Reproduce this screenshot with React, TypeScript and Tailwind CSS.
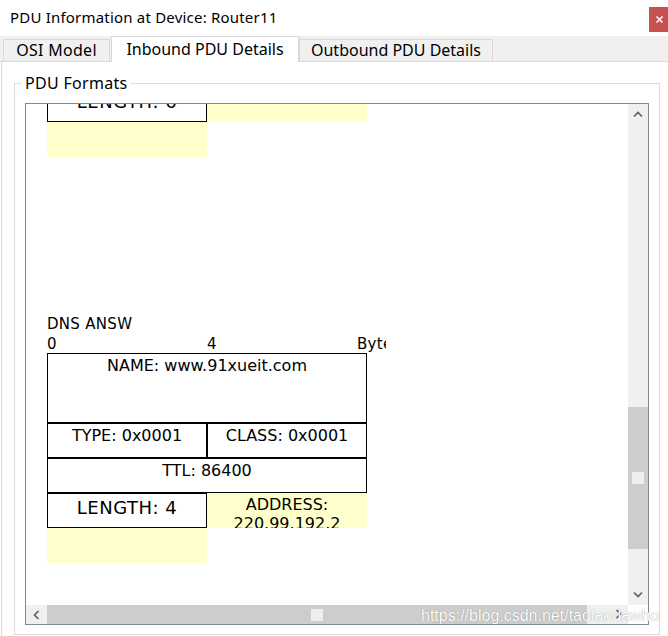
import type { ReactNode } from "react";

const YELLOW = "bg-[#ffffcc]";

function Chevron({ dir }: { dir: "up" | "down" | "left" | "right" }) {
  const paths = {
    up: "M1 5.5 L5 1.5 L9 5.5",
    down: "M1 1.5 L5 5.5 L9 1.5",
    left: "M5.5 1 L1.5 5 L5.5 9",
    right: "M1.5 1 L5.5 5 L1.5 9",
  };
  const vertical = dir === "up" || dir === "down";
  return (
    <svg
      width={vertical ? 10 : 7}
      height={vertical ? 7 : 10}
      viewBox={vertical ? "0 0 10 7" : "0 0 7 10"}
    >
      <path d={paths[dir]} fill="none" stroke="#606060" strokeWidth="1.7" />
    </svg>
  );
}

function Cell({
  w,
  big,
  tall,
  children,
}: {
  w: number;
  big?: boolean;
  tall?: boolean;
  children?: ReactNode;
}) {
  return (
    <div
      className={`${w === 320 ? "w-[320px]" : "w-[160px]"} ${
        tall ? "h-[70px]" : "h-[35px]"
      } shrink-0 overflow-hidden border border-black text-center whitespace-nowrap ${
        big
          ? "pt-[3px] text-[18px] leading-[21px] tracking-[0.5px]"
          : "pt-[2px] text-[16px] leading-[19px]"
      }`}
    >
      {children}
    </div>
  );
}

function Tab({ label, active }: { label: string; active?: boolean }) {
  return active ? (
    <div className="flex h-[26px] w-[188px] shrink-0 justify-center border-x border-t border-[#d9d9d9] bg-white pt-[2px] text-[16px] leading-[20px]">
      {label}
    </div>
  ) : (
    <div
      className={`flex h-[23px] shrink-0 justify-center border border-[#d9d9d9] bg-[#f0f0f0] text-[16px] leading-[20px] ${
        label === "OSI Model" ? "w-[107px] tracking-[0.3px]" : "w-[194px]"
      }`}
    >
      {label}
    </div>
  );
}

export default function App() {
  return (
    <div className="relative h-[636px] w-[668px] overflow-hidden bg-white font-['Noto_Sans',sans-serif] text-black">
      {/* title bar */}
      <div className="flex h-[36px] items-start justify-between">
        <span className="ml-[10px] mt-[8px] text-[15px] leading-[19px] tracking-[0.2px]">
          PDU Information at Device: Router11
        </span>
        <div className="mt-[7px] flex h-[25px] w-[19px] items-center bg-[#c75050] pl-[7px]">
          <svg width="7" height="7" viewBox="0 0 7 7">
            <path d="M0.5 0.5 L6.5 6.5 M6.5 0.5 L0.5 6.5" stroke="white" strokeWidth="1.5" />
          </svg>
        </div>
      </div>

      {/* tabs */}
      <div className="flex h-[26px] items-end bg-[#f0f0f0]">
        <div className="h-[1px] w-[3px] bg-[#d9d9d9]" />
        <Tab label="OSI Model" />
        <div className="h-[1px] w-[1px] bg-[#d9d9d9]" />
        <Tab label="Inbound PDU Details" active />
        <Tab label="Outbound PDU Details" />
        <div className="h-[1px] flex-1 bg-[#d9d9d9]" />
      </div>

      {/* tab panel */}
      <div className="ml-[1px] h-[574px] border-l border-[#d9d9d9] pt-[11px]">
        <fieldset className="ml-[12px] h-[562px] w-[646px] border border-[#dcdcdc]">
          <legend className="ml-[7px] px-[3px] text-[16px] leading-[20px] tracking-[0.3px]">
            PDU Formats
          </legend>

          <div className="ml-[10px] mt-[10px] flex h-[522px] w-[624px] flex-col border border-[#828790]">
            <div className="flex h-[501px]">
              {/* viewport */}
              <div className="h-[501px] w-[602px] overflow-hidden pl-[21px] font-['DejaVu_Sans',sans-serif]">
                <div className="-mt-[17px]">
                  <div className="flex">
                    <Cell w={160} big>
                      LENGTH: 6
                    </Cell>
                    <div className={`h-[35px] w-[160px] ${YELLOW}`} />
                  </div>
                  <div className={`h-[35px] w-[160px] ${YELLOW}`} />
                </div>

                <div className="mt-[158px]">
                  <div className="h-[20px] w-[86px] overflow-hidden whitespace-nowrap text-[15px] leading-[18px] tracking-[0.3px]">
                    DNS ANSWER
                  </div>
                  <div className="flex h-[18px] text-[15px] leading-[18px] tracking-[0.3px]">
                    <span className="w-[160px]">0</span>
                    <span className="w-[150px]">4</span>
                    <span className="w-[29px] overflow-hidden whitespace-nowrap">Bytes</span>
                  </div>
                  <Cell w={320} tall>
                    NAME: www.91xueit.com
                  </Cell>
                  <div className="flex">
                    <Cell w={160}>TYPE: 0x0001</Cell>
                    <Cell w={160}>CLASS: 0x0001</Cell>
                  </div>
                  <Cell w={320}>TTL: 86400</Cell>
                  <div className="flex">
                    <Cell w={160} big>
                      LENGTH: 4
                    </Cell>
                    <div
                      className={`h-[35px] w-[160px] overflow-hidden pt-[2px] text-center text-[16px] leading-[19px] ${YELLOW}`}
                    >
                      ADDRESS:
                      <br />
                      220.99.192.2
                    </div>
                  </div>
                  <div className={`h-[35px] w-[160px] ${YELLOW}`} />
                </div>
              </div>

              {/* vertical scrollbar */}
              <div className="flex w-[20px] flex-col bg-[#f0f0f0]">
                <div className="flex h-[20px] items-center justify-center">
                  <Chevron dir="up" />
                </div>
                <div className="flex-1">
                  <div className="mt-[283px] flex h-[142px] items-center justify-center bg-[#cdcdcd]">
                    <div className="h-[12px] w-[12px] bg-[#eeeeee]" />
                  </div>
                </div>
                <div className="flex h-[20px] items-center justify-center pb-[2px]">
                  <Chevron dir="down" />
                </div>
              </div>
            </div>

            {/* horizontal scrollbar */}
            <div className="flex h-[19px]">
              <div className="flex w-[602px] bg-[#f0f0f0]">
                <div className="flex w-[21px] items-center justify-center">
                  <Chevron dir="left" />
                </div>
                <div className="flex w-[540px] items-center justify-center bg-[#cdcdcd]">
                  <div className="h-[12px] w-[12px] bg-[#eeeeee]" />
                </div>
                <div className="w-[21px]" />
                <div className="flex w-[20px] items-center justify-center pb-[1px]">
                  <Chevron dir="right" />
                </div>
              </div>
              <div className="w-[20px] bg-white" />
            </div>
          </div>
        </fieldset>
      </div>

      {/* watermark */}
      <div className="absolute left-[421px] top-[607px] whitespace-nowrap font-['Liberation_Sans',sans-serif] text-[16px] leading-[18px] text-white [text-shadow:0_0_1px_rgba(0,0,0,0.45)]">
        https://blog.csdn.net/taolaodawho
      </div>
    </div>
  );
}
